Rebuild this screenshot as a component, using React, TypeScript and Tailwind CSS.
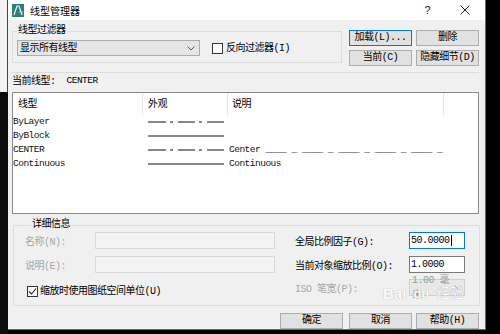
import React from 'react'

const mono = "font-['Liberation_Mono','Noto_Sans_CJK_SC',monospace]"

function Btn({ label, focus, className = '' }: { label: string; focus?: boolean; className?: string }) {
  return (
    <div
      className={`flex h-[16px] w-[63px] items-center justify-center border bg-[#e1e1e1] text-[10px] leading-none text-black ${
        focus ? 'border-[#0078d7]' : 'border-[#adadad]'
      } ${className}`}
    >
      {label}
    </div>
  )
}

// 虚线样式：长 - 短 - 长
function DashLine({ solid }: { solid?: boolean }) {
  return (
    <svg width="76" height="4" className="block">
      {solid ? (
        <line x1="0" y1="2" x2="76" y2="2" stroke="#111" strokeWidth="1" />
      ) : (
        <g stroke="#111" strokeWidth="1">
          <line x1="0" y1="2" x2="18" y2="2" />
          <line x1="22" y1="2" x2="25" y2="2" />
          <line x1="30" y1="2" x2="47" y2="2" />
          <line x1="51" y1="2" x2="54" y2="2" />
          <line x1="59" y1="2" x2="76" y2="2" />
        </g>
      )}
    </svg>
  )
}

const rows = [
  { name: 'ByLayer', solid: false, desc: '' },
  { name: 'ByBlock', solid: true, desc: '' },
  { name: 'CENTER', solid: false, desc: 'Center ____ _ ____ _ ____ _ ____ _ ____ _' },
  { name: 'Continuous', solid: true, desc: 'Continuous' },
]

export default function App() {
  return (
    <div className={`flex h-[334px] w-[500px] overflow-hidden bg-black tracking-[-0.5px] ${mono}`}>
      {/* 左侧露出的背景窗口 */}
      <div className="flex w-[8px] flex-col">
        <div className="h-[92px] border-r border-[#444] bg-[#f3f3f3]" />
        <div className="flex-1 bg-[#0c0c0c]" />
      </div>

      <div className="relative flex h-[330px] w-[478px] flex-col border-r border-b border-[#1a7fd4] bg-[#f0f0f0]">
        {/* 标题栏 */}
        <div className="flex h-[22px] items-center bg-white">
          <svg width="12" height="13" className="ml-[4px]">
            <rect x="0" y="0" width="12" height="13" fill="#2f7f78" />
            <path d="M2 11 L5 2 L7 2 L10 11" stroke="#e8f5f3" strokeWidth="1.2" fill="none" />
            <path d="M7 8 H11" stroke="#9fd9cf" strokeWidth="1.2" />
          </svg>
          <span className="ml-[6px] font-['Noto_Sans_CJK_SC',sans-serif] text-[10px] tracking-normal text-black">线型管理器</span>
          <span className="ml-auto font-['Liberation_Sans',sans-serif] text-[11px] text-[#222]">?</span>
          <svg width="10" height="10" className="mr-[15px] ml-[30px]">
            <path d="M0.5 0.5 L9.5 9.5 M9.5 0.5 L0.5 9.5" stroke="#222" strokeWidth="1" />
          </svg>
        </div>

        <div className="flex flex-1 flex-col pt-[4px] pr-[6px] pl-[4px] text-[10px] text-black">
          {/* 线型过滤器 + 按钮 */}
          <div className="flex h-[42px] items-start">
            <fieldset className="w-[330px] border border-[#dcdcdc] px-[4px] pt-[2px] pb-[6px]">
              <legend className="px-[1px] text-[10px] leading-[14px]">线型过滤器</legend>
              <div className="flex items-center">
                <div className="flex h-[16px] w-[183px] items-center border border-[#acacac] bg-[#e5e5e5] pl-[2px]">
                  <span>显示所有线型</span>
                  <svg width="8" height="5" className="mr-[4px] ml-auto">
                    <path d="M0.5 0.5 L4 4 L7.5 0.5" stroke="#555" fill="none" />
                  </svg>
                </div>
                <div className="ml-[12px] h-[11px] w-[11px] border border-[#333] bg-white" />
                <span className="ml-[3px]">反向过滤器(I)</span>
              </div>
            </fieldset>
            <div className="mt-[6px] ml-[7px] grid grid-cols-[63px_63px] gap-x-[4px] gap-y-[4px]">
              <Btn label="加载(L)..." focus />
              <Btn label="删除" />
              <Btn label="当前(C)" />
              <Btn label="隐藏细节(D)" />
            </div>
          </div>

          {/* 当前线型 */}
          <div className="mt-[6px] flex h-[17px] items-center border-t border-[#dcdcdc]">
            <span>当前线型:</span>
            <span className="ml-[11px] text-[9.5px]">CENTER</span>
          </div>

          {/* 线型列表 */}
          <div className="mt-[3px] h-[122px] border border-[#8a8a8a] bg-white">
            <div className="flex h-[22px]">
              <div className="flex w-[130px] items-center border-r border-[#e5e5e5] pl-[5px]">线型</div>
              <div className="flex w-[85px] items-center border-r border-[#e5e5e5] pl-[5px]">外观</div>
              <div className="flex w-[216px] items-center border-r border-[#e5e5e5] pl-[4px]">说明</div>
            </div>
            {rows.map((r) => (
              <div key={r.name} className="flex h-[14px] items-center text-[9.5px] text-[#111]">
                <div className="w-[130px]">{r.name}</div>
                <div className="w-[85px] pl-[5px]">
                  <DashLine solid={r.solid} />
                </div>
                <div className="pl-[1px] whitespace-pre">{r.desc}</div>
              </div>
            ))}
          </div>

          {/* 详细信息 */}
          <fieldset className="mt-[5px] ml-[1px] border border-[#dcdcdc] pt-[1px] pr-[14px] pb-[6px] pl-[11px]">
            <legend className="ml-[6px] px-[1px] text-[10px] leading-[12px]">详细信息</legend>
            <div className="flex">
              <div className="flex w-[250px] flex-col">
                <div className="flex h-[17px] items-center">
                  <span className="w-[70px] pt-[3px] text-[#a6a6a6]">名称(N):</span>
                  <div className="h-[17px] w-[180px] border border-[#d9d9d9] bg-[#f3f3f3]" />
                </div>
                <div className="mt-[7px] flex h-[17px] items-center">
                  <span className="w-[70px] pt-[3px] text-[#a6a6a6]">说明(E):</span>
                  <div className="h-[17px] w-[180px] border border-[#d9d9d9] bg-[#f3f3f3]" />
                </div>
                <div className="mt-[11px] flex items-center pl-[2px]">
                  <div className="flex h-[11px] w-[11px] items-center justify-center border border-[#333] bg-white">
                    <svg width="9" height="9">
                      <path d="M1 4.5 L3.5 7 L8 1.5" stroke="#222" strokeWidth="1.1" fill="none" />
                    </svg>
                  </div>
                  <span className="ml-[2px]">缩放时使用图纸空间单位(U)</span>
                </div>
              </div>
              <div className="ml-[20px] flex flex-col">
                <div className="flex h-[17px] items-center">
                  <span className="w-[114px] pt-[3px]">全局比例因子(G):</span>
                  <div className="flex h-[17px] w-[56px] items-center border border-[#0078d7] bg-white pl-[1px]">
                    <span>50.0000</span>
                    <span className="ml-[1px] h-[11px] w-[1px] bg-black" />
                  </div>
                </div>
                <div className="mt-[7px] flex h-[17px] items-center">
                  <span className="w-[114px] pt-[3px]">当前对象缩放比例(O):</span>
                  <div className="flex h-[17px] w-[56px] items-center border border-[#7a7a7a] bg-white pl-[1px]">1.0000</div>
                </div>
                <div className="mt-[6px] flex h-[17px] items-center">
                  <span className="w-[114px] pt-[3px] text-[#a6a6a6]">ISO 笔宽(P):</span>
                  <div className="flex h-[17px] w-[56px] items-center border border-[#d0d0d0] bg-[#e8e8e8] pl-[2px] text-[#9a9a9a]">
                    <span>1.00 毫米</span>
                    <svg width="8" height="5" className="mr-[3px] ml-auto">
                      <path d="M0.5 0.5 L4 4 L7.5 0.5" stroke="#aaa" fill="none" />
                    </svg>
                  </div>
                </div>
              </div>
            </div>
          </fieldset>

          {/* 底部按钮 */}
          <div className="mt-[7px] flex justify-end">
            <Btn label="确定" />
            <Btn label="取消" className="ml-[6px]" />
            <Btn label="帮助(H)" className="ml-[4px]" />
          </div>
        </div>

        {/* 百度经验水印 */}
        <div className="absolute top-[279px] left-[375px] flex items-end font-['Liberation_Sans','Noto_Sans_CJK_SC',sans-serif] tracking-normal text-white [text-shadow:0_0_1px_#8a8a8a] opacity-90">
          <span className="text-[15px] leading-[15px] font-bold">Bai</span>
          <span className="mx-[2px] flex h-[22px] w-[26px] items-end justify-center rounded-full text-[13px] leading-[14px] font-bold">du</span>
          <span className="text-[14px] leading-[15px]">经验</span>
        </div>
      </div>
      <div className="flex-1 bg-black" />
    </div>
  )
}
